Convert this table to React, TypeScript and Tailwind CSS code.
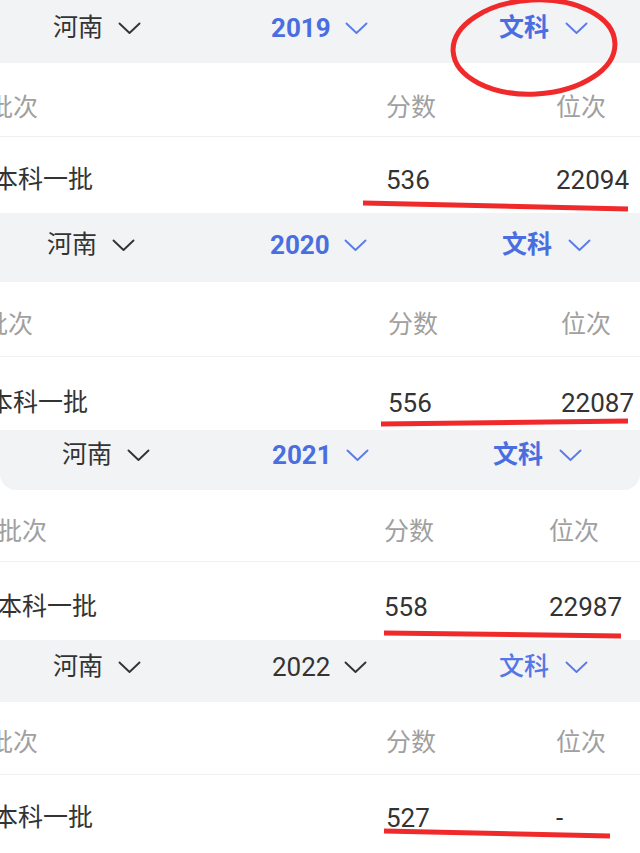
import React from "react";

type Section = {
  year: string;
  yearActive: boolean;
  typeBold: boolean;
  wrap: string;
  bar: string;
  provCell: string;
  yearCell: string;
  headRow: string;
  dataRow: string;
  col1: string;
  col2: string;
  headShift: string;
  dataShift: string;
  score: string;
  rank: string;
};

const SECTIONS: Section[] = [
  {
    year: "2019",
    yearActive: true,
    typeBold: true,
    wrap: "",
    bar: "h-[63px] pt-[13px]",
    provCell: "w-[271px] pl-[53px]",
    yearCell: "w-[228px]",
    headRow: "h-[74px] pt-[30px]",
    dataRow: "h-[76px] pt-[28px]",
    col1: "w-[386px]",
    col2: "w-[170px]",
    headShift: "-ml-[12px]",
    dataShift: "-ml-[7px]",
    score: "536",
    rank: "22094",
  },
  {
    year: "2020",
    yearActive: true,
    typeBold: true,
    wrap: "",
    bar: "h-[69px] pt-[17px]",
    provCell: "w-[270px] pl-[47px]",
    yearCell: "w-[232px]",
    headRow: "h-[75px] pt-[28px]",
    dataRow: "h-[70px] pt-[31px]",
    col1: "w-[388px]",
    col2: "w-[173px]",
    headShift: "-ml-[17px]",
    dataShift: "-ml-[12px]",
    score: "556",
    rank: "22087",
  },
  {
    year: "2021",
    yearActive: true,
    typeBold: true,
    wrap: "pt-[3px]",
    bar: "h-[60px] pt-[10px] rounded-b-[16px]",
    provCell: "w-[272px] pl-[62px]",
    yearCell: "w-[221px]",
    headRow: "h-[72px] pt-[27px]",
    dataRow: "h-[78px] pt-[30px]",
    col1: "w-[384px]",
    col2: "w-[165px]",
    headShift: "-ml-[3px]",
    dataShift: "-ml-[3px]",
    score: "558",
    rank: "22987",
  },
  {
    year: "2022",
    yearActive: false,
    typeBold: false,
    wrap: "",
    bar: "h-[62px] pt-[12px]",
    provCell: "w-[272px] pl-[53px]",
    yearCell: "w-[227px]",
    headRow: "h-[73px] pt-[26px]",
    dataRow: "h-[78px] pt-[28px]",
    col1: "w-[386px]",
    col2: "w-[170px]",
    headShift: "-ml-[12px]",
    dataShift: "-ml-[7px]",
    score: "527",
    rank: "-",
  },
];

function Chevron({ blue }: { blue?: boolean }) {
  return (
    <svg width="23" height="13" viewBox="0 0 23 13" fill="none" className="shrink-0">
      <polyline
        points="1.5,1.5 11.5,11 21.5,1.5"
        stroke={blue ? "#5b7be6" : "#333333"}
        strokeWidth="1.9"
        strokeLinecap="round"
        strokeLinejoin="round"
      />
    </svg>
  );
}

function ScoreBlock({ s }: { s: Section }) {
  return (
    <div className={s.wrap}>
      <div className={`flex items-start bg-[#f2f3f5] ${s.bar}`}>
        <div className={`flex items-center gap-[15px] h-[30px] ${s.provCell}`}>
          <span className="text-[#333333]">河南</span>
          <Chevron />
        </div>
        <div className={`flex items-center gap-[14px] h-[30px] ${s.yearCell}`}>
          {s.yearActive ? (
            <span className="text-[26px] font-bold text-[#4a6ee0]">{s.year}</span>
          ) : (
            <span className="text-[26px] text-[#333333]">{s.year}</span>
          )}
          <Chevron blue={s.yearActive} />
        </div>
        <div className="flex items-center gap-[16px] h-[30px]">
          <span className={s.typeBold ? "font-bold text-[#4a6ee0]" : "font-medium text-[#5577e6]"}>
            文科
          </span>
          <Chevron blue />
        </div>
      </div>
      <div className={`flex items-start border-b border-[#f0f0f0] text-[#a0a0a0] ${s.headRow}`}>
        <div className={s.col1}>
          <span className={`block ${s.headShift}`}>批次</span>
        </div>
        <div className={s.col2}>分数</div>
        <div>位次</div>
      </div>
      <div className={`flex items-start text-[#333333] ${s.dataRow}`}>
        <div className={s.col1}>
          <span className={`block ${s.dataShift}`}>本科一批</span>
        </div>
        <div className={`${s.col2} text-[26px]`}>{s.score}</div>
        <div className="text-[26px]">{s.rank}</div>
      </div>
    </div>
  );
}

export default function App() {
  return (
    <div className="relative w-[640px] h-[853px] overflow-hidden bg-white font-[Roboto,'Noto_Sans_CJK_SC',sans-serif] text-[25px] leading-[30px]">
      {SECTIONS.map((s) => (
        <ScoreBlock key={s.year} s={s} />
      ))}

      {/* hand-drawn red marks */}
      <svg
        className="absolute inset-0 pointer-events-none"
        width="640"
        height="853"
        viewBox="0 0 640 853"
      >
        <ellipse
          cx="534"
          cy="47"
          rx="81"
          ry="47"
          transform="rotate(-3 534 47)"
          fill="none"
          stroke="#f02a2a"
          strokeWidth="5"
        />
        <line x1="363" y1="203" x2="628" y2="209" stroke="#f02a2a" strokeWidth="5" />
        <line x1="381" y1="424" x2="628" y2="421" stroke="#f02a2a" strokeWidth="5" />
        <line x1="384" y1="633" x2="621" y2="636" stroke="#f02a2a" strokeWidth="5" />
        <line x1="384" y1="831" x2="610" y2="836" stroke="#f02a2a" strokeWidth="5" />
      </svg>
    </div>
  );
}
